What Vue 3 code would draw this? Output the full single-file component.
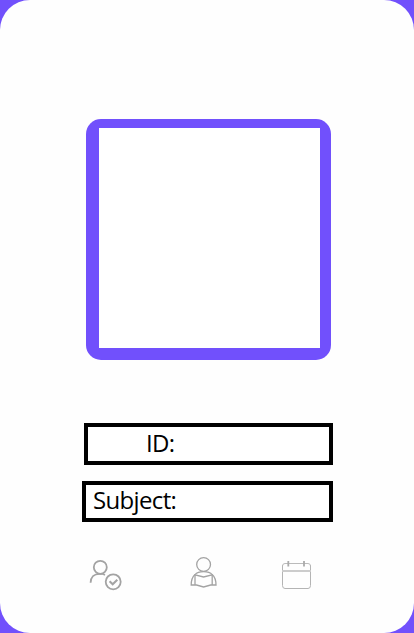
<script setup>
const fields = [
  { key: 'id', label: 'ID:' },
  { key: 'subject', label: 'Subject:' },
]
</script>

<template>
  <main class="card">
    <div class="photo"><div class="photo-inner"></div></div>
    <div class="fields">
      <div v-for="f in fields" :key="f.key" class="field" :class="f.key">
        <span class="label">{{ f.label }}</span>
      </div>
    </div>
    <nav class="nav">
      <svg class="icon" width="34" height="38" viewBox="0 -4 34 38">
        <g fill="none" stroke="#a3a3a3" stroke-width="1.8">
          <circle cx="12.3" cy="9.3" r="6.5" />
          <path d="M2.6 24.8C2.6 19 6.2 15.8 11.5 15.8H14.5L17 17" />
          <circle cx="25.2" cy="23.8" r="7.5" />
          <path d="M21.6 23.2L24.7 26.2L29.3 21.8" stroke-width="2.1" />
        </g>
      </svg>
      <svg class="icon" width="30" height="38" viewBox="0 -1 30 38">
        <g fill="none" stroke="#a3a3a3" stroke-width="1.3">
          <circle cx="14.6" cy="9.5" r="6.9" />
          <path d="M6 19.6C3.6 21.8 2.2 25.2 2.2 30H7.5L14.6 32L21.7 30H27C27 25.2 25.6 21.8 23.2 19.6" />
          <path d="M6 19.6C9.5 15.6 19.7 15.6 23.2 19.6" />
          <path d="M6 30V19.8L14.6 22L23.2 19.8V30" />
        </g>
      </svg>
      <svg class="icon" width="32" height="38" viewBox="0 -3 32 38">
        <g fill="none" stroke="#aaa">
          <path d="M2.5 8V28.5Q2.5 31.5 5 31.5H28Q30.5 31.5 30.5 28.5V8" stroke="#b4b4b4" />
          <path d="M2.5 9Q2.5 6.5 5 6.5H28Q30.5 6.5 30.5 9" stroke="#bbb" />
          <path d="M2 14H31" stroke="#ccc" stroke-width="1.8" />
          <path d="M8.3 4V9.5M24 4V9.5" stroke-width="1.8" />
        </g>
      </svg>
    </nav>
  </main>
</template>

<style>
body {
  background: #7150fc;
}
</style>

<style scoped>
.card {
  box-sizing: border-box;
  width: 414px;
  height: 633px;
  padding-top: 118.5px;
  border-radius: 30px;
  background: #fefefe;
  overflow: hidden;
}
.photo {
  box-sizing: border-box;
  width: 244.5px;
  height: 241.5px;
  margin-left: 86px;
  padding: 9.5px 10.5px 12px 13px;
  border-radius: 15px;
  background: #7150fc;
}
.photo-inner {
  height: 220px;
  background: #fff;
}
.fields {
  display: flex;
  flex-direction: column;
  align-items: flex-end;
  gap: 16px;
  margin: 63px 81px 0 0;
}
.field {
  box-sizing: border-box;
  border: 4px solid #000;
  background: #fff;
  color: #000;
  font: 24px/32px "Open Sans", "Noto Sans", sans-serif;
  white-space: nowrap;
}
.id {
  width: 249px;
  height: 42px;
  padding-left: 58px;
}
.subject {
  width: 251px;
  height: 41px;
  padding-left: 7px;
  line-height: 29px;
}
.label {
  display: block;
  letter-spacing: -0.65px;
}
.nav {
  display: flex;
  margin: 32px 0 0 88px;
}
.icon:nth-child(2) {
  margin-left: 67px;
}
.icon:nth-child(3) {
  margin-left: 61px;
}
</style>
